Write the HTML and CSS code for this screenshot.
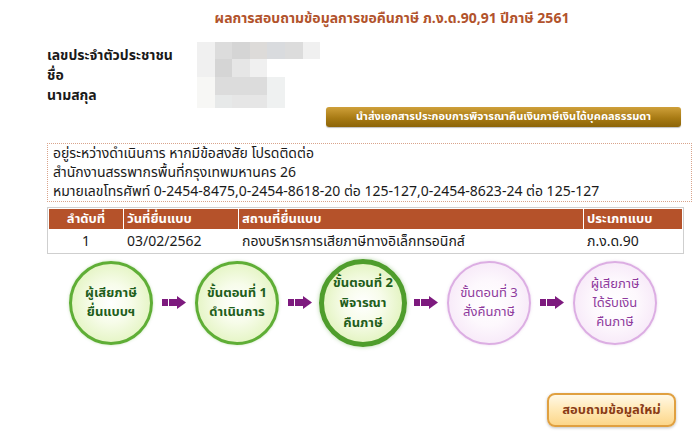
FILE: index.html
```html
<!DOCTYPE html>
<html lang="th">
<head>
<meta charset="utf-8">
<title>ผลการสอบถามข้อมูลการขอคืนภาษี</title>
<link rel="stylesheet" href="styles.css">
</head>
<body>
<div class="page">
  <h1 class="title">ผลการสอบถามข้อมูลการขอคืนภาษี ภ.ง.ด.90,91 ปีภาษี 2561</h1>

  <div class="person">
    <div class="labels">
      <div>เลขประจำตัวประชาชน</div>
      <div>ชื่อ</div>
      <div>นามสกุล</div>
    </div>
    <div class="mosaic">
      <span class="s1"></span><span class="s3"></span><span class="s4"></span><span class="s3w"></span><span class="s3b"></span><span class="s3"></span><span class="s1"></span>
      <span class="s1"></span><span class="s4"></span><span class="s2"></span><span class="s1"></span><span class="s0"></span><span class="s0"></span><span class="s0"></span>
      <span class="s1w"></span><span class="s3"></span><span class="s3"></span><span class="s3"></span><span class="s1b"></span><span class="s0"></span><span class="s0"></span>
      <span class="s1w"></span><span class="s2b"></span><span class="s2"></span><span class="s2"></span><span class="s1b"></span><span class="s0"></span><span class="s0"></span>
    </div>
  </div>

  <div class="gold-row">
    <a class="gold-btn">นำส่งเอกสารประกอบการพิจารณาคืนเงินภาษีเงินได้บุคคลธรรมดา</a>
  </div>

  <div class="notice">
    <div>อยู่ระหว่างดำเนินการ หากมีข้อสงสัย โปรดติดต่อ</div>
    <div>สำนักงานสรรพากรพื้นที่กรุงเทพมหานคร 26</div>
    <div>หมายเลขโทรศัพท์ 0-2454-8475,0-2454-8618-20 ต่อ 125-127,0-2454-8623-24 ต่อ 125-127</div>
  </div>

  <table class="grid">
    <thead>
      <tr>
        <th class="c1">ลำดับที่</th>
        <th class="c2">วันที่ยื่นแบบ</th>
        <th class="c3">สถานที่ยื่นแบบ</th>
        <th class="c4">ประเภทแบบ</th>
      </tr>
    </thead>
    <tbody>
      <tr>
        <td class="c1">1</td>
        <td>03/02/2562</td>
        <td>กองบริหารการเสียภาษีทางอิเล็กทรอนิกส์</td>
        <td>ภ.ง.ด.90</td>
      </tr>
    </tbody>
  </table>

  <div class="steps">
    <div class="step done">ผู้เสียภาษี<br>ยื่นแบบฯ</div>
    <div class="arrow"><svg width="24" height="14" viewBox="0 0 24 14"><rect x="0" y="3" width="6" height="7" fill="#7d1a7e"/><rect x="7" y="3" width="9" height="7" fill="#7d1a7e"/><polygon points="15,0 24,6.5 15,13" fill="#7d1a7e"/></svg></div>
    <div class="step done">ขั้นตอนที่ 1<br>ดำเนินการ</div>
    <div class="arrow"><svg width="24" height="14" viewBox="0 0 24 14"><rect x="0" y="3" width="6" height="7" fill="#7d1a7e"/><rect x="7" y="3" width="9" height="7" fill="#7d1a7e"/><polygon points="15,0 24,6.5 15,13" fill="#7d1a7e"/></svg></div>
    <div class="step current">ขั้นตอนที่ 2<br>พิจารณา<br>คืนภาษี</div>
    <div class="arrow"><svg width="24" height="14" viewBox="0 0 24 14"><rect x="0" y="3" width="6" height="7" fill="#7d1a7e"/><rect x="7" y="3" width="9" height="7" fill="#7d1a7e"/><polygon points="15,0 24,6.5 15,13" fill="#7d1a7e"/></svg></div>
    <div class="step todo">ขั้นตอนที่ 3<br>สั่งคืนภาษี</div>
    <div class="arrow"><svg width="24" height="14" viewBox="0 0 24 14"><rect x="0" y="3" width="6" height="7" fill="#7d1a7e"/><rect x="7" y="3" width="9" height="7" fill="#7d1a7e"/><polygon points="15,0 24,6.5 15,13" fill="#7d1a7e"/></svg></div>
    <div class="step todo">ผู้เสียภาษี<br>ได้รับเงิน<br>คืนภาษี</div>
  </div>

  <div class="bottom-row">
    <a class="again-btn">สอบถามข้อมูลใหม่</a>
  </div>
</div>
</body>
</html>
```

FILE: styles.css
```css
* { box-sizing: border-box; }
html, body { margin: 0; padding: 0; background: #ffffff; }
body {
  font-family: Tahoma, "Noto Sans Thai", "Noto Sans Thai UI", Garuda, Loma, "Noto Sans", "DejaVu Sans", sans-serif;
  color: #1a1a1a;
  font-size: 13px;
}
.page { width: 700px; height: 439px; overflow: hidden; }

.title {
  margin: 0;
  padding: 9px 0 0 84px;
  text-align: center;
  font-size: 14px;
  font-weight: bold;
  color: #b2532c;
  line-height: 19px;
}

.person {
  display: flex;
  margin-top: 14px;
  padding-left: 47px;
}
.labels {
  width: 150px;
  padding-top: 4px;
  font-weight: bold;
  font-size: 14px;
  line-height: 20px;
}
.mosaic {
  display: grid;
  grid-template-columns: repeat(7, 17.6px);
  grid-template-rows: 17px 18px 18px 13px;
}
.mosaic span { display: block; }
.s0 { background: #ffffff; }
.s1 { background: #f0f0f0; }
.s1w { background: #f7f7f5; }
.s1b { background: #eff1f1; }
.s2 { background: #e6e6e6; }
.s2b { background: #e7e9e9; }
.s3 { background: #dcdcdc; }
.s3w { background: #dddbd9; }
.s3b { background: #d9dbde; }
.s4 { background: #d5d5d5; }

.gold-row {
  display: flex;
  justify-content: flex-end;
  padding-right: 19px;
  margin-top: -1px;
}
.gold-btn {
  display: block;
  width: 355px;
  height: 20px;
  line-height: 20px;
  text-align: center;
  color: #ffffff;
  font-weight: bold;
  font-size: 11px;
  border-radius: 3px;
  background: linear-gradient(#cfa03a, #a87b14 55%, #8c6408);
  box-shadow: 0 1px 1px rgba(0,0,0,0.25);
}

.notice {
  margin: 16px 8px 0 47px;
  border: 1px dotted #d9a48c;
  padding: 0 5px;
  font-size: 14px;
  line-height: 19px;
  color: #1a1a1a;
}

.grid {
  margin: 5px 0 0 47px;
  width: 637px;
  border: 1px solid #cfcfcf;
  border-spacing: 1px;
  font-size: 14px;
}
.grid th {
  background: #b5522a;
  color: #ffffff;
  font-weight: bold;
  font-size: 13px;
  text-align: left;
  height: 20px;
  padding: 0 3px;
}
.grid td {
  height: 22px;
  padding: 0 3px;
}
.grid .c1 { width: 74px; text-align: center; }
.grid .c2 { width: 114px; }
.grid .c3 { width: 344px; }

.steps {
  display: flex;
  align-items: center;
  padding-left: 69px;
  margin-top: 0;
  height: 98px;
}
.step {
  width: 84px;
  height: 84px;
  border-radius: 50%;
  display: flex;
  align-items: center;
  justify-content: center;
  text-align: center;
  font-size: 13px;
  line-height: 19px;
  flex: none;
}
.step.done {
  border: 3px solid #5fae36;
  background: radial-gradient(circle, #ffffff 0%, #f7fcea 35%, #d9f0ac 100%);
  color: #1f5e1b;
  font-weight: bold;
  box-shadow: 0 0 3px rgba(95,174,54,0.35);
}
.step.current {
  width: 88px;
  height: 88px;
  margin: 0 -2px;
  border: 5px solid #4f9d2c;
  background: radial-gradient(circle, #ffffff 0%, #f7fcea 35%, #d6eea6 100%);
  color: #1f5e1b;
  font-weight: bold;
  line-height: 20px;
  box-shadow: 0 0 4px rgba(79,157,44,0.4);
}
.step.todo {
  border: 2px solid #dcaee3;
  background: radial-gradient(circle, #ffffff 0%, #fdf8fd 40%, #f3dff5 100%);
  color: #8e3a9d;
  box-shadow: 0 0 3px rgba(200,150,210,0.35);
}
.arrow {
  width: 42px;
  display: flex;
  justify-content: center;
  flex: none;
}
.arrow svg { display: block; }

.bottom-row {
  display: flex;
  justify-content: flex-end;
  padding-right: 24px;
  margin-top: 41px;
}
.again-btn {
  display: block;
  width: 129px;
  height: 34px;
  line-height: 31px;
  text-align: center;
  border: 2px solid #e0a040;
  border-radius: 8px;
  background: linear-gradient(#fff8e6, #ffe8b4 50%, #fcd68a);
  color: #8a3c16;
  font-weight: bold;
  font-size: 13px;
  box-shadow: 0 1px 3px rgba(0,0,0,0.25);
}
```
